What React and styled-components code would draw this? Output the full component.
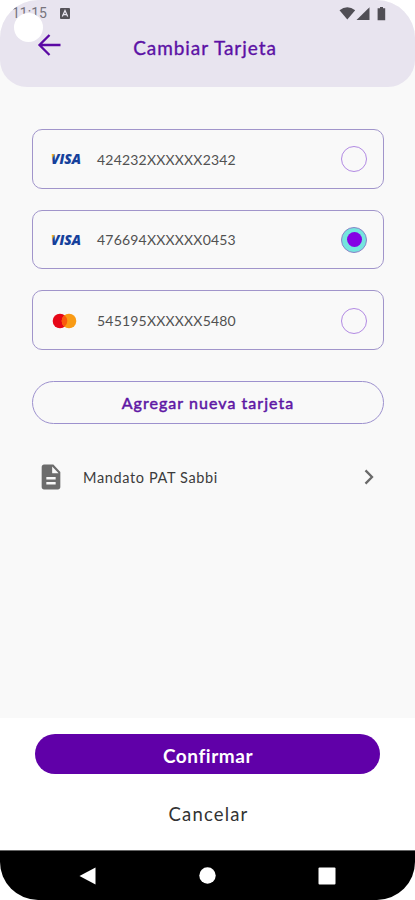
import React, { useState } from 'react';
import styled, { createGlobalStyle } from 'styled-components';

const GlobalStyle = createGlobalStyle`
  *, *::before, *::after {
    box-sizing: border-box;
  }

  body {
    margin: 0;
    background: #fff;
    font-family: Lato, 'Open Sans', sans-serif;
  }

  button {
    font-family: inherit;
    padding: 0;
    border: none;
    background: none;
    cursor: pointer;
  }

  svg {
    display: block;
    flex-shrink: 0;
  }
`;

const Screen = styled.div`
  width: 415px;
  height: 900px;
  display: flex;
  flex-direction: column;
  overflow: hidden;
  border-radius: 38px;
  background: #f9f9f9;
`;

const Header = styled.header`
  position: relative;
  height: 87px;
  border-radius: 0 0 27px 27px;
  background: #e8e4ef;
`;

const StatusBar = styled.div`
  height: 27px;
  padding: 0 28px 0 12px;
  display: flex;
  align-items: center;
  color: #4e4c53;
`;

const Clock = styled.span`
  width: 48px;
  font-family: Roboto, sans-serif;
  font-size: 14px;
  line-height: 27px;
  color: #77747d;
`;

const StatusIcons = styled.div`
  margin-left: auto;
  display: flex;
  align-items: center;
`;

const CameraHole = styled.span`
  position: absolute;
  top: 13px;
  left: 14px;
  width: 29px;
  height: 29px;
  border-radius: 50%;
  background: #fff;
`;

const TitleBar = styled.div`
  display: grid;
  grid-template-columns: 60px 1fr 60px;
  align-items: center;
  padding: 0 5px 0 0;
  height: 42px;
`;

const BackButton = styled.button`
  padding: 0 0 7px 37px;
`;

const Title = styled.h1`
  margin: 0;
  text-align: center;
  font-size: 19px;
  font-weight: 400;
  line-height: 42px;
  letter-spacing: 0.95px;
  color: #5c11a5;
  -webkit-text-stroke: 0.35px #5c11a5;
`;

const Content = styled.main`
  flex: 1;
  padding: 42px 31px 0 32px;
`;

const CardList = styled.div`
  display: flex;
  flex-direction: column;
  gap: 21px;
`;

const CardOption = styled.button`
  width: 100%;
  height: 59.7px;
  padding: 0.6px 16px 0 18px;
  display: flex;
  align-items: center;
  border: 1.4px solid #a195cb;
  border-radius: 10px;
`;

const Brand = styled.span`
  width: 46px;
  display: flex;
`;

const CardNumber = styled.span`
  font-size: 14px;
  letter-spacing: 0.2px;
  color: #515151;
`;

const Radio = styled.span`
  width: 26px;
  height: 26px;
  margin-left: auto;
  display: flex;
  align-items: center;
  justify-content: center;
  border: 1.3px solid ${({ $checked }) => ($checked ? '#8a83c8' : '#b28ae3')};
  border-radius: 50%;
  background: ${({ $checked }) => ($checked ? '#74e5de' : 'transparent')};

  &::after {
    content: '';
    width: 15px;
    height: 15px;
    border-radius: 50%;
    background: ${({ $checked }) => ($checked ? '#8500e4' : 'transparent')};
  }
`;

const AddButton = styled.button`
  width: 100%;
  height: 43px;
  margin-top: 31px;
  border: 1.3px solid #9d91ce;
  border-radius: 22px;
  font-size: 16px;
  font-weight: 400;
  letter-spacing: 1.05px;
  color: #5e16a4;
  -webkit-text-stroke: 0.5px #5e16a4;
`;

const MandateRow = styled.button`
  width: 100%;
  height: 32px;
  margin-top: 37px;
  padding: 0 7px 0 5px;
  display: flex;
  align-items: center;
`;

const MandateLabel = styled.span`
  flex: 1;
  padding-left: 18px;
  text-align: left;
  font-size: 14.5px;
  letter-spacing: 0.63px;
  color: #3c3c3c;
`;

const Footer = styled.footer`
  height: 132px;
  padding: 16px 35px 0;
  display: flex;
  flex-direction: column;
  align-items: center;
  background: #fff;
`;

const ConfirmButton = styled.button`
  width: 345px;
  height: 40px;
  padding: 2px 0 0 1px;
  border-radius: 20px;
  background: #6000a8;
  font-size: 19px;
  font-weight: 700;
  letter-spacing: 0.55px;
  color: #fff;
`;

const CancelButton = styled.button`
  margin-top: 20px;
  height: 40px;
  padding-left: 2px;
  font-size: 18.5px;
  letter-spacing: 1.15px;
  color: #333;
`;

const NavBar = styled.nav`
  height: 50px;
  padding: 0 79px;
  display: flex;
  align-items: center;
  justify-content: space-between;
  border-top: 1px solid #666;
  background: #000;
`;

const cards = [
  { id: 1, brand: 'visa', number: '424232XXXXXX2342' },
  { id: 2, brand: 'visa', number: '476694XXXXXX0453' },
  { id: 3, brand: 'mastercard', number: '545195XXXXXX5480' },
];

const VisaLogo = () => (
  <svg width="36" height="24" viewBox="0 0 36 24">
    <defs>
      <linearGradient id="visa" gradientUnits="userSpaceOnUse" x1="0" y1="6" x2="8" y2="11">
        <stop offset="0.3" stopColor="#f0a62b" />
        <stop offset="0.5" stopColor="#173f9a" />
      </linearGradient>
    </defs>
    <text
      x="0"
      y="17"
      textLength="30"
      lengthAdjust="spacingAndGlyphs"
      fontFamily="Open Sans, sans-serif"
      fontSize="14"
      fontWeight="800"
      fontStyle="italic"
      fill="url(#visa)"
    >
      VISA
    </text>
  </svg>
);

const MastercardLogo = () => (
  <svg width="32" height="16" viewBox="0 0 32 16">
    <circle cx="9" cy="8" r="7.3" fill="#e60717" />
    <circle cx="18" cy="8" r="7.3" fill="#f99b15" />
    <path d="M13.5 2.25a7.3 7.3 0 0 1 0 11.5a7.3 7.3 0 0 1 0-11.5z" fill="#fa5a0c" />
  </svg>
);

const BackIcon = () => (
  <svg width="24" height="24" viewBox="0 0 24 24" fill="none" stroke="#5b09a4" strokeWidth="2.3">
    <path d="M12.5 2L2.5 12L12.5 22M2.5 12H23.5" />
  </svg>
);

const AppIcon = () => (
  <svg width="10" height="11" viewBox="0 0 10 11">
    <rect width="10" height="11" rx="1" fill="#555259" />
    <path d="M2.3 8.5L5 2.6L7.7 8.5M3.4 6.6H6.6" fill="none" stroke="#e8e4ef" strokeWidth="1.3" />
  </svg>
);

const SignalIcons = () => (
  <svg width="48" height="16" viewBox="0 0 48 16" fill="#504e55">
    <path d="M0.5 4.2Q8.3 -1.8 16.2 4.2L8.3 13.6z" />
    <path d="M30.5 1.3V14H17.5z" />
    <path d="M41 1h3v1.2h2.2v12h-7.6v-12H41z" />
  </svg>
);

const DocumentIcon = () => (
  <svg width="28" height="30" viewBox="0 0 24 24" preserveAspectRatio="none" fill="#6c6c6c">
    <path d="M14 2H6c-1.1 0-1.99.9-1.99 2L4 20c0 1.1.89 2 1.99 2H18c1.1 0 2-.9 2-2V8l-6-6zm2 16H8v-2h8v2zm0-4H8v-2h8v2zm-3-5V3.5L18.5 9H13z" />
  </svg>
);

const ChevronIcon = () => (
  <svg width="16" height="20" viewBox="0 0 16 20" fill="none" stroke="#6a6a6a" strokeWidth="2.3">
    <path d="M4.5 3.4L11 10L4.5 16.6" />
  </svg>
);

const App = () => {
  const [selected, setSelected] = useState(2);

  return (
    <>
      <GlobalStyle />
      <Screen>
        <Header>
          <StatusBar>
            <Clock>11:15</Clock>
            <AppIcon />
            <StatusIcons>
              <SignalIcons />
            </StatusIcons>
          </StatusBar>
          <CameraHole />
          <TitleBar>
            <BackButton aria-label="Volver">
              <BackIcon />
            </BackButton>
            <Title>Cambiar Tarjeta</Title>
          </TitleBar>
        </Header>
        <Content>
          <CardList>
            {cards.map((card) => (
              <CardOption key={card.id} onClick={() => setSelected(card.id)}>
                <Brand>{card.brand === 'visa' ? <VisaLogo /> : <MastercardLogo />}</Brand>
                <CardNumber>{card.number}</CardNumber>
                <Radio $checked={selected === card.id} />
              </CardOption>
            ))}
          </CardList>
          <AddButton>Agregar nueva tarjeta</AddButton>
          <MandateRow>
            <DocumentIcon />
            <MandateLabel>Mandato PAT Sabbi</MandateLabel>
            <ChevronIcon />
          </MandateRow>
        </Content>
        <Footer>
          <ConfirmButton>Confirmar</ConfirmButton>
          <CancelButton>Cancelar</CancelButton>
        </Footer>
        <NavBar>
          <svg width="17" height="18" viewBox="0 0 17 18" fill="#fff">
            <path d="M0.5 9L16.5 0.5V17.5z" />
          </svg>
          <svg width="17" height="17" viewBox="0 0 17 17" fill="#fff">
            <circle cx="8.5" cy="8.5" r="8.2" />
          </svg>
          <svg width="18" height="18" viewBox="0 0 18 18" fill="#fff">
            <rect x="0.5" y="0.5" width="17" height="17" rx="1" />
          </svg>
        </NavBar>
      </Screen>
    </>
  );
};

export default App;
